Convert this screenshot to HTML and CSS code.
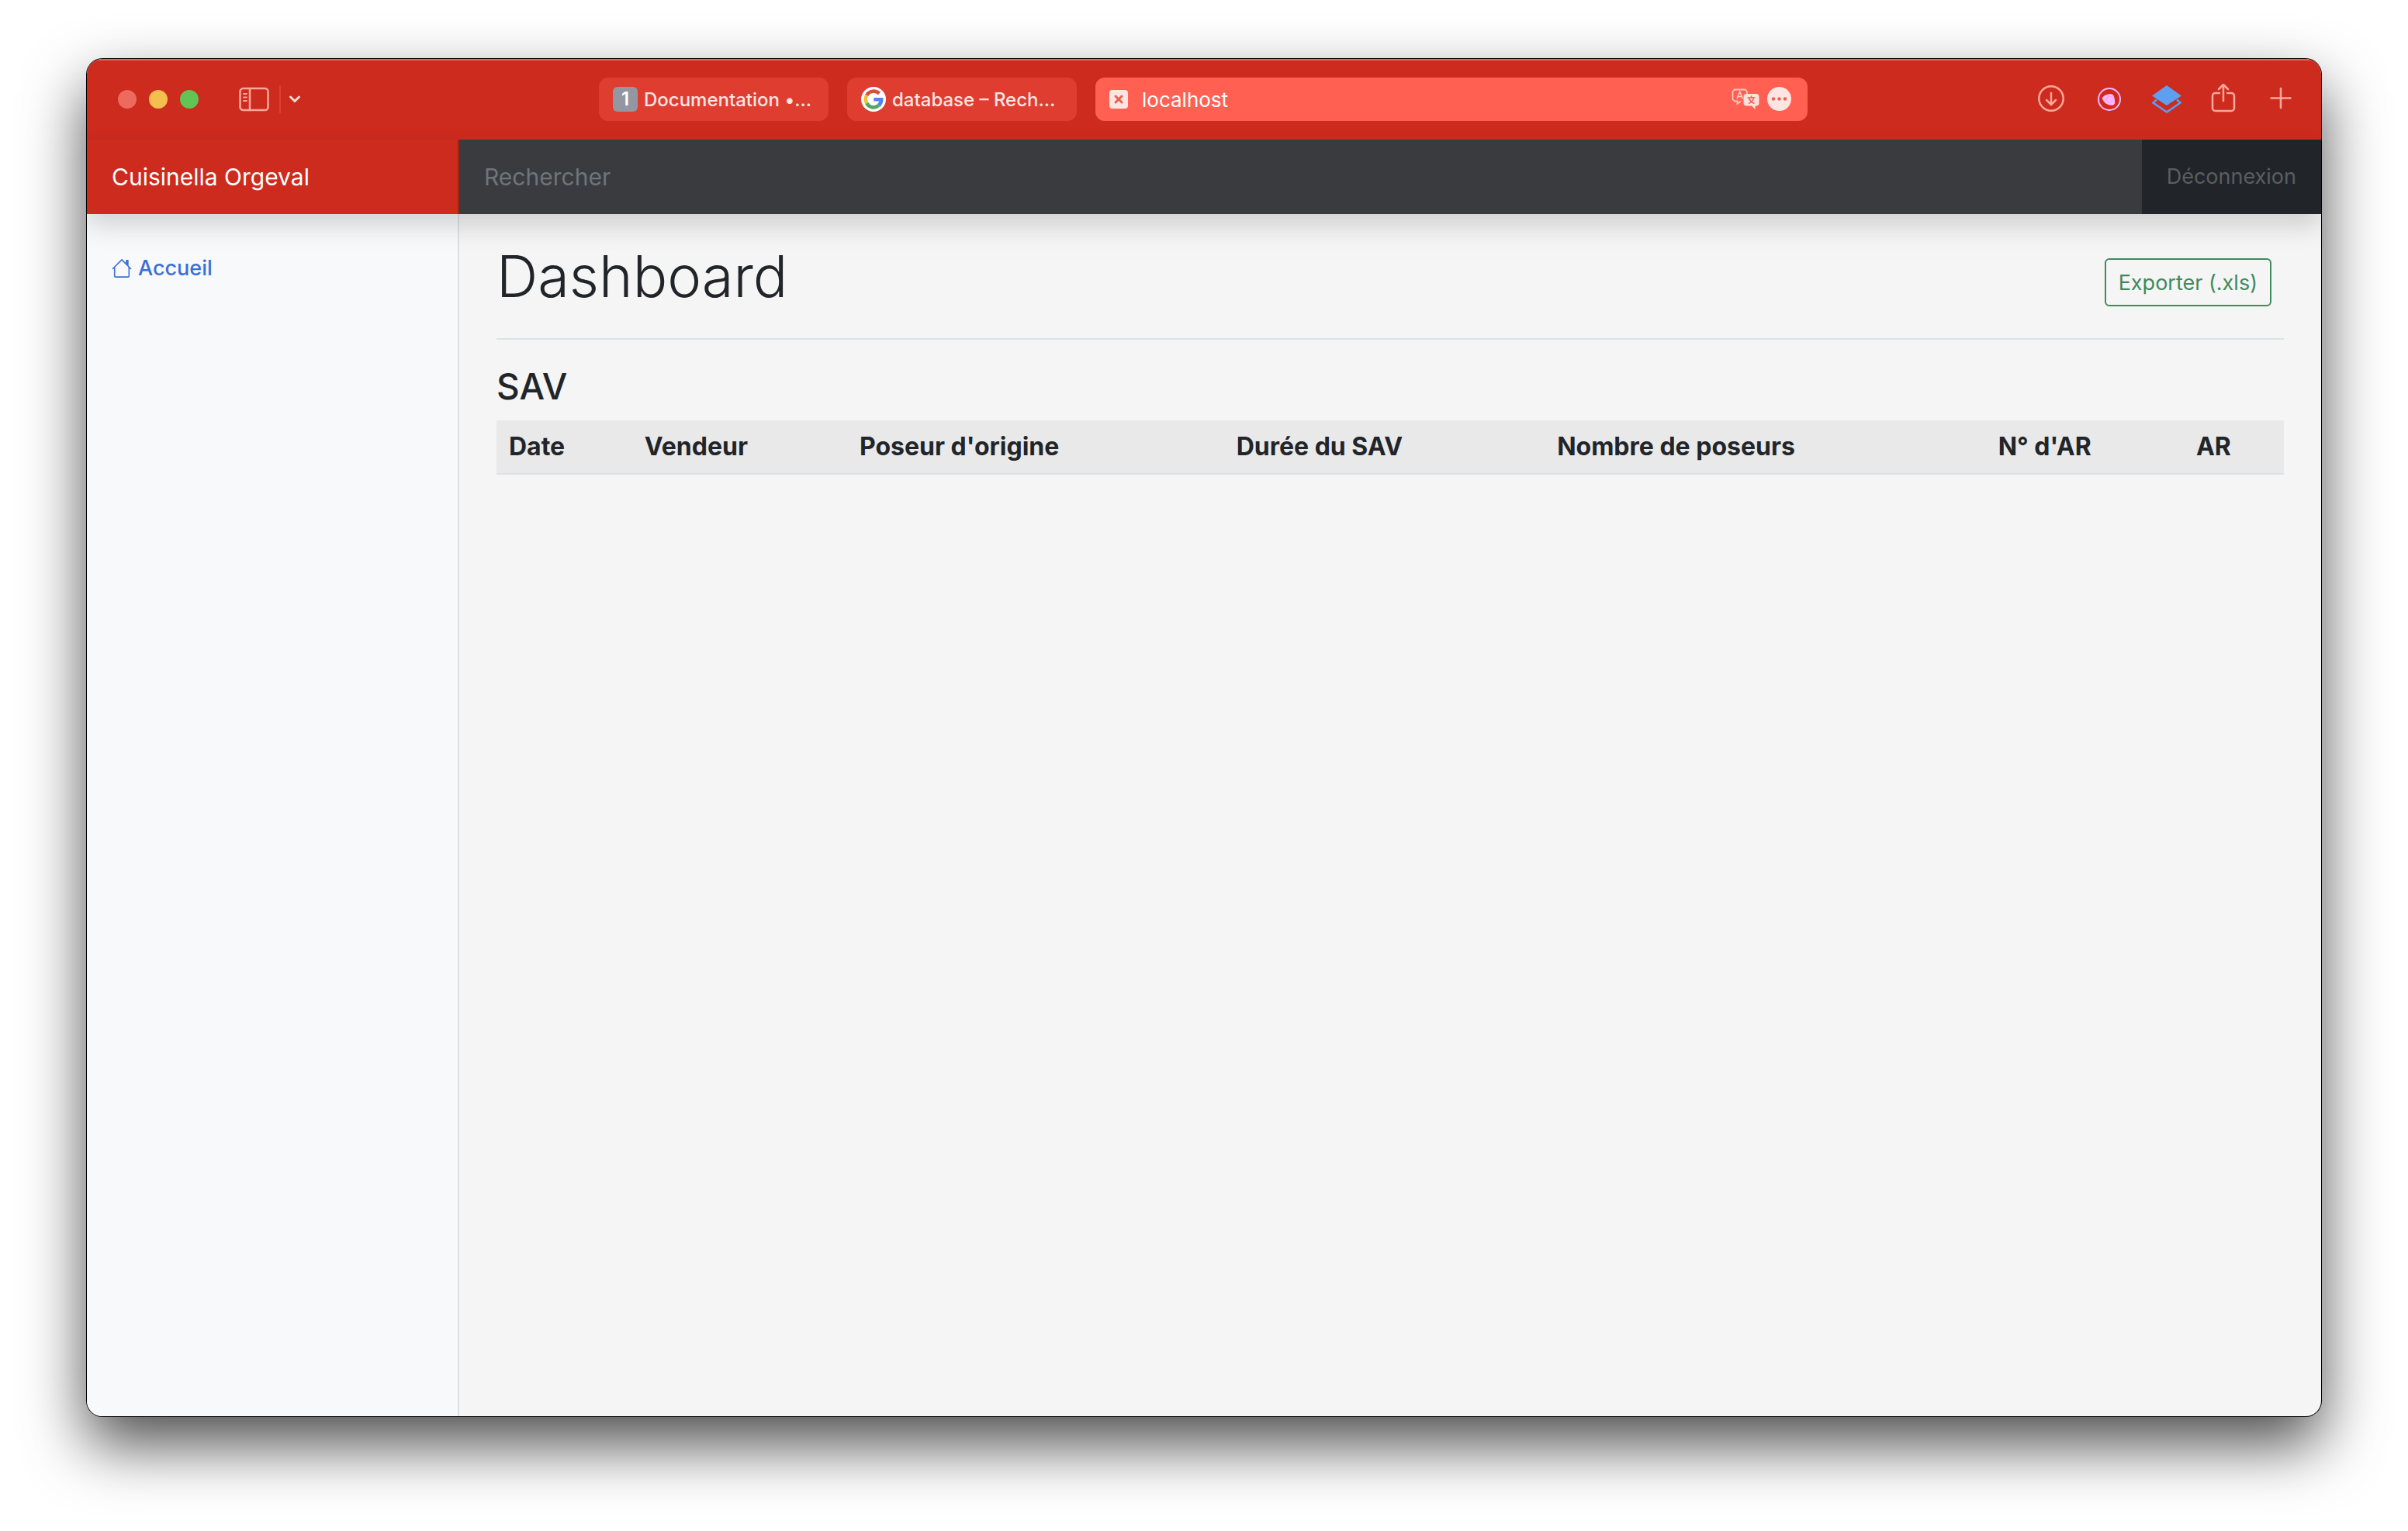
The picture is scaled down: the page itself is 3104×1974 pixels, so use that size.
FILE: index.html
```html
<!DOCTYPE html>
<html lang="fr">
<head>
<meta charset="utf-8">
<title>Cuisinella Orgeval</title>
<link rel="stylesheet" href="styles.css">
</head>
<body>
<div class="window">
  <div class="toolbar">
    <div class="toolbar-left">
      <div class="lights">
        <button class="light light-close" aria-label="Fermer"></button>
        <button class="light light-min" aria-label="Réduire"></button>
        <button class="light light-max" aria-label="Agrandir"></button>
      </div>
      <button class="icon-btn sidebar-btn" aria-label="Barre latérale">
        <svg width="40" height="32" viewBox="0 0 40 32" fill="none" stroke="#ffa79c" stroke-width="2.5" stroke-linecap="round"><rect x="1.5" y="2" width="36" height="28" rx="4"/><path d="M14 2v28"/><path d="M6 9h4M6 13.500h4M6 18h4" stroke-width="1.800"/></svg>
      </button>
      <span class="divider"></span>
      <button class="icon-btn" aria-label="Groupes d'onglets">
        <svg width="16" height="12" viewBox="0 0 16 12" fill="none" stroke="#ffd9d4" stroke-width="3" stroke-linecap="round" stroke-linejoin="round"><path d="M2.500 3l5.500 5.500L13.500 3"/></svg>
      </button>
    </div>
    <div class="tabs">
      <button class="tab">
        <span class="favicon">1</span>
        <span class="tab-title">Documentation •…</span>
      </button>
      <button class="tab">
        <svg width="32" height="32" viewBox="0 0 32 32"><circle cx="16" cy="16" r="16" fill="#fff"/><g fill="none" stroke-width="4.600"><path d="M23.400 8.700A10.200 10.200 0 0 0 7.200 10.900" stroke="#d9503f"/><path d="M7.200 10.900a10.200 10.200 0 0 0 0 10.200" stroke="#f2bd42"/><path d="M7.200 21.100a10.200 10.200 0 0 0 15.600 2.700" stroke="#58a55c"/><path d="M22.800 23.800a10.200 10.200 0 0 0 3.400-7.600H16.300" stroke="#5383ec"/></g></svg>
        <span class="tab-title">database – Rech…</span>
      </button>
      <div class="address">
        <svg width="24" height="24" viewBox="0 0 24 24"><rect width="24" height="24" rx="4" fill="#ffe5e2"/><path d="M8 8l8 8M16 8l-8 8" stroke="#e8604f" stroke-width="3" stroke-linecap="round"/></svg>
        <input class="url" type="text" value="localhost" aria-label="Adresse">
        <svg width="38" height="28" viewBox="0 0 38 28"><path d="M12 16.500l-4.500 3.500v-3.500H5A3.500 3.500 0 0 1 1.500 13V5A3.500 3.500 0 0 1 5 1.500h11.500A3.500 3.500 0 0 1 20 5v2" fill="none" stroke="#ffc4bd" stroke-width="1.800"/><path d="M7 13.500L10.700 4l3.700 9.500M8.500 10.500h4.500" fill="none" stroke="#ffd0ca" stroke-width="1.500"/><path d="M19.500 7h12a4 4 0 0 1 4 4v7.500a4 4 0 0 1-4 4h-1V27L26 22.500h-6.500a4 4 0 0 1-4-4V11a4 4 0 0 1 4-4z" fill="#ffe0dc"/><path d="M20.500 12h10M25.500 9.500v2.500M22 19.500c4-1.500 6-4 6.500-7.500M22.500 12c1 4 3 6 7 7.500" fill="none" stroke="#f06353" stroke-width="1.700"/></svg>
        <svg width="32" height="32" viewBox="0 0 32 32"><circle cx="15.500" cy="15.500" r="15.500" fill="#ffe5e2"/><g fill="#e8604f"><circle cx="8" cy="15.500" r="2.200"/><circle cx="15.500" cy="15.500" r="2.200"/><circle cx="23" cy="15.500" r="2.200"/></g></svg>
      </div>
    </div>
    <div class="toolbar-right">
      <button class="icon-btn tool" aria-label="Téléchargements">
        <svg width="40" height="40" viewBox="0 0 40 40" fill="none" stroke="#ffa79c" stroke-width="2.500" stroke-linecap="round" stroke-linejoin="round"><circle cx="20" cy="19" r="15.700"/><path d="M20 12v14.500M14 21l6 6 6-6"/></svg>
      </button>
      <button class="icon-btn tool" aria-label="Extension">
        <svg width="40" height="40" viewBox="0 0 40 40"><circle cx="21" cy="20" r="14" fill="none" stroke="#ffb5fb" stroke-width="2"/><path d="M12 18c2-3 7-5.500 12-4.500 3 .5 3.500 4 4 7.500.5 4 0 6-2 6.500-6 1-11-2-13.500-7-.6-1-.8-1.800-.5-2.500z" fill="#ffb5fb"/><circle cx="21.500" cy="20" r="4" fill="none" stroke="#f7a3f3"/></svg>
      </button>
      <button class="icon-btn tool" aria-label="Calques">
        <svg width="40" height="40" viewBox="0 0 40 40"><path d="M8 20.500L3.500 24.500 21 36.500l17.500-12-4.500-4" fill="none" stroke="#5b9bf0" stroke-width="2.600"/><path d="M21 2l19 13.500L21 28 2 15.500z" fill="#5f9ff2"/></svg>
      </button>
      <button class="icon-btn tool" aria-label="Partager">
        <svg width="40" height="40" viewBox="0 0 40 40" fill="none" stroke="#ffa79c" stroke-width="2.500" stroke-linecap="round" stroke-linejoin="round"><path d="M15 12H9.500A3.500 3.500 0 0 0 6 15.500v16A3.500 3.500 0 0 0 9.500 35h21a3.500 3.500 0 0 0 3.500-3.500v-16a3.500 3.500 0 0 0-3.500-3.500H25M20 22V1.500M14 7l6-6 6 6"/></svg>
      </button>
      <button class="icon-btn tool" aria-label="Nouvel onglet">
        <svg width="40" height="40" viewBox="0 0 40 40" stroke="#ffa79c" stroke-width="2.600" stroke-linecap="round"><path d="M20 6v25M7.500 18.500h25"/></svg>
      </button>
    </div>
  </div>
  <header class="navbar">
    <a class="brand" href="#">Cuisinella Orgeval</a>
    <input class="search" type="text" placeholder="Rechercher" aria-label="Rechercher">
    <a class="signout" href="#">Déconnexion</a>
  </header>
  <div class="page">
    <nav class="sidebar">
      <a class="nav-link" href="#">
        <svg width="26" height="26" viewBox="0 0 28 28" fill="none" stroke="#3b6fd8" stroke-width="1.700" stroke-linecap="round" stroke-linejoin="round"><path d="M1.500 14.500L14 2l12.500 12.500M4 12.500v12A1.500 1.500 0 0 0 5.500 26h17a1.500 1.500 0 0 0 1.500-1.500v-12"/><path d="M20.500 3h2v7l-2-2z" fill="#3b6fd8"/></svg>
        Accueil
      </a>
    </nav>
    <main class="main">
      <div class="title-row">
        <h1>Dashboard</h1>
        <button class="export">Exporter (.xls)</button>
      </div>
      <h2>SAV</h2>
      <table>
        <thead>
          <tr><th scope="col">Date</th><th scope="col">Vendeur</th><th scope="col">Poseur d'origine</th><th scope="col">Durée du SAV</th><th scope="col">Nombre de poseurs</th><th scope="col">N° d'AR</th><th scope="col">AR</th></tr>
        </thead>
        <tbody></tbody>
      </table>
    </main>
  </div>
</div>
</body>
</html>
```
FILE: styles.css
```css
* { box-sizing: border-box; }

body {
  margin: 0;
  min-height: 100vh;
  padding: 76px 112px 148px;
  display: flex;
  background: #fff;
  color: #212529;
  font-family: Inter, "Liberation Sans", sans-serif;
  font-size: 30px;
}

button, input { font: inherit; border: 0; margin: 0; padding: 0; background: none; outline: 0; }
a { text-decoration: none; }
svg { display: block; flex: none; }

.window {
  flex: 1;
  display: flex;
  flex-direction: column;
  border-radius: 20px;
  overflow: hidden;
  background: #f5f5f5;
  box-shadow: 0 0 0 1px #000, 0 36px 80px rgba(0, 0, 0, .7);
}

/* Browser toolbar */
.toolbar {
  display: grid;
  grid-template-columns: 636px 1fr 638px;
  align-items: center;
  height: 104px;
  padding: 0 24px;
  background: #cc2b1e;
  box-shadow: inset 0 2px 0 #dc6a60;
}
.toolbar-left { display: flex; align-items: center; padding-left: 16px; }
.lights { display: flex; gap: 16px; margin-right: 52px; }
.light { width: 24px; height: 24px; border-radius: 50%; }
.light-close { background: #ed6a5e; }
.light-min { background: #f4bf4f; }
.light-max { background: #61c554; }
.icon-btn { display: flex; align-items: center; justify-content: center; }
.divider { width: 2px; height: 36px; margin: 0 10px 0 12px; background: #df3c30; }

.tabs { display: flex; gap: 24px; }
.tab, .address { display: flex; align-items: center; height: 56px; border-radius: 12px; }
.tab {
  flex: none;
  width: 296px;
  gap: 8px;
  padding: 0 18px;
  background: #de3d30;
  color: #ffe5e2;
  font-size: 24px;
  font-weight: 500;
  white-space: nowrap;
}
.favicon {
  flex: none;
  width: 32px;
  height: 32px;
  border-radius: 6px;
  background: #9297a1;
  color: #fff;
  font-size: 24px;
  line-height: 32px;
  font-weight: 600;
}
.address { flex: 1; padding: 0 20px 0 18px; gap: 8px; background: #ff6052; }
.url { flex: 1; min-width: 0; padding-left: 10px; color: #fff; font-size: 26px; }

.toolbar-right { display: flex; justify-content: flex-end; gap: 34px; padding-right: 8px; }
.tool { width: 40px; height: 40px; }

/* Site header */
.navbar {
  position: relative;
  display: flex;
  height: 96px;
  background: #212529;
  box-shadow: 0 16px 32px rgba(0, 0, 0, .15);
}
.brand {
  width: 480px;
  padding: 0 32px;
  background: #cc2b1e;
  border-right: 2px solid #a02318;
  color: #fff;
  line-height: 96px;
}
.search { flex: 1; padding: 0 32px; background: #3a3b3f; }
.search::placeholder { color: #6c757d; opacity: 1; }
.signout { padding: 0 32px; color: #5b5e61; font-size: 27px; line-height: 96px; }

/* Content */
.page { flex: 1; display: flex; }
.sidebar { width: 480px; padding: 48px 32px; background: #f8f9fa; border-right: 2px solid #dfe0e1; }
.nav-link { display: flex; align-items: center; gap: 8px; color: #3b6fd8; font-size: 27px; line-height: 44px; font-weight: 500; }
.main { flex: 1; padding: 32px 48px; }
.title-row {
  display: flex;
  align-items: center;
  justify-content: space-between;
  padding: 0 16px 16px 0;
  margin-bottom: 32px;
  border-bottom: 2px solid #dee2e6;
}
h1 { margin: 0 0 16px; font-size: 74px; line-height: 96px; font-weight: 300; }
h2 { margin: 0 0 16px; font-size: 46px; line-height: 56px; font-weight: 500; }
.export {
  height: 62px;
  padding: 0 16px;
  border: 2px solid #3f8a5b;
  border-radius: 6px;
  color: #3f8a5b;
  font-size: 27px;
}
table { width: 100%; border-collapse: collapse; }
th {
  height: 69px;
  padding: 0 16px;
  background: #e9e9e9;
  border-bottom: 2px solid #dee2e6;
  text-align: left;
  font-size: 32px;
  line-height: 48px;
  font-weight: 700;
}
```
